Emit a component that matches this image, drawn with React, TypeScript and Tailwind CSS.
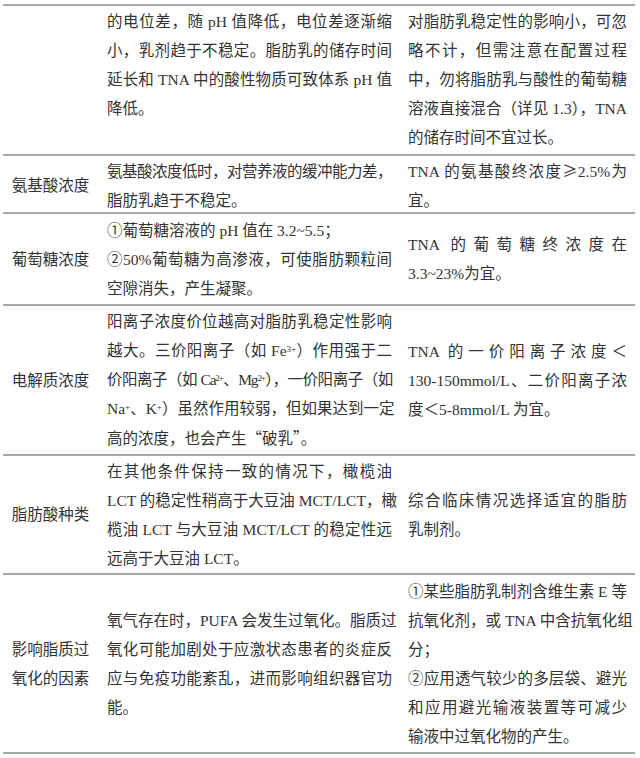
import type { ReactNode } from 'react';

type Line = { t: ReactNode; j?: boolean; cls?: string };

type Row = {
  h: string;
  name: string[];
  desc: Line[];
  note: Line[];
  top?: boolean;
};

function Cjk({ children }: { children: ReactNode }) {
  return <span className="font-['Noto_Sans_CJK_SC',sans-serif]">{children}</span>;
}

const rows: Row[] = [
  {
    h: 'h-[150px]',
    name: [],
    top: true,
    desc: [
      { t: '的电位差，随 pH 值降低，电位差逐渐缩', j: true },
      { t: '小，乳剂趋于不稳定。脂肪乳的储存时间', j: true },
      { t: '延长和 TNA 中的酸性物质可致体系 pH 值', j: true },
      { t: '降低。' },
    ],
    note: [
      { t: '对脂肪乳稳定性的影响小，可忽', j: true },
      { t: '略不计，但需注意在配置过程', j: true },
      { t: '中，勿将脂肪乳与酸性的葡萄糖', j: true },
      { t: '溶液直接混合（详见 1.3），TNA', j: true },
      { t: '的储存时间不宜过长。' },
    ],
  },
  {
    h: 'h-[58px]',
    name: ['氨基酸浓度'],
    desc: [
      { t: '氨基酸浓度低时，对营养液的缓冲能力差，', j: true, cls: 'tracking-[-0.5px]' },
      { t: '脂肪乳趋于不稳定。' },
    ],
    note: [
      {
        t: (
          <>
            TNA 的氨基酸终浓度<Cjk>≥</Cjk>2.5%为
          </>
        ),
        j: true,
      },
      { t: '宜。' },
    ],
  },
  {
    h: 'h-[92px]',
    name: ['葡萄糖浓度'],
    desc: [
      { t: '①葡萄糖溶液的 pH 值在 3.2~5.5；' },
      { t: '②50%葡萄糖为高渗液，可使脂肪颗粒间', j: true },
      { t: '空隙消失，产生凝聚。' },
    ],
    note: [
      { t: 'TNA 的葡萄糖终浓度在', j: true },
      { t: '3.3~23%为宜。' },
    ],
  },
  {
    h: 'h-[150px]',
    name: ['电解质浓度'],
    desc: [
      { t: '阳离子浓度价位越高对脂肪乳稳定性影响', j: true },
      {
        t: (
          <>
            越大。三价阳离子（如 Fe<sup className="text-[9px]">3+</sup>）作用强于二
          </>
        ),
        j: true,
      },
      {
        t: (
          <>
            价阳离子（如 Ca<sup className="text-[9px]">2+</sup>、Mg<sup className="text-[9px]">2+</sup>），一价阳离子（如
          </>
        ),
        j: true,
        cls: 'tracking-[-1.2px]',
      },
      {
        t: (
          <>
            Na<sup className="text-[9px]">+</sup>、K<sup className="text-[9px]">+</sup>）虽然作用较弱，但如果达到一定
          </>
        ),
        j: true,
      },
      {
        t: (
          <>
            高的浓度，也会产生<Cjk>“</Cjk>破乳<Cjk>”</Cjk>。
          </>
        ),
      },
    ],
    note: [
      { t: 'TNA 的一价阳离子浓度＜', j: true },
      { t: '130-150mmol/L、二价阳离子浓', j: true },
      { t: '度＜5-8mmol/L 为宜。' },
    ],
  },
  {
    h: 'h-[119px]',
    name: ['脂肪酸种类'],
    desc: [
      { t: '在其他条件保持一致的情况下，橄榄油', j: true },
      { t: 'LCT 的稳定性稍高于大豆油 MCT/LCT，橄', j: true },
      { t: '榄油 LCT 与大豆油 MCT/LCT 的稳定性远', j: true },
      { t: '远高于大豆油 LCT。' },
    ],
    note: [
      { t: '综合临床情况选择适宜的脂肪', j: true },
      { t: '乳制剂。' },
    ],
  },
  {
    h: 'h-[179px]',
    name: ['影响脂质过', '氧化的因素'],
    desc: [
      { t: '氧气存在时，PUFA 会发生过氧化。脂质过', j: true },
      { t: '氧化可能加剧处于应激状态患者的炎症反', j: true },
      { t: '应与免疫功能紊乱，进而影响组织器官功', j: true },
      { t: '能。' },
    ],
    note: [
      { t: '①某些脂肪乳制剂含维生素 E 等', j: true },
      { t: '抗氧化剂，或 TNA 中含抗氧化组', j: true },
      { t: '分；' },
      { t: '②应用透气较少的多层袋、避光', j: true },
      { t: '和应用避光输液装置等可减少', j: true },
      { t: '输液中过氧化物的产生。' },
    ],
  },
];

function Lines({ lines }: { lines: Line[] }) {
  return (
    <div className="w-full">
      {lines.map((l, i) => (
        <span
          key={i}
          className={`block whitespace-nowrap ${l.j ? 'text-justify [text-align-last:justify]' : 'text-left'} ${l.cls ?? ''}`}
        >
          {l.t}
        </span>
      ))}
    </div>
  );
}

export default function App() {
  return (
    <div className="w-[640px] h-[758px] bg-white pt-[4px] pl-[3px] font-['Liberation_Serif','Noto_Sans_CJK_SC',serif] text-[15.5px] leading-[29px] text-[#333]">
      <div className="w-[632px] border-t-2 border-[#a8a8a8]">
        {rows.map((r, i) => (
          <div
            key={i}
            className={`grid grid-cols-[95px_302px_235px] border-b-2 border-[#a8a8a8] ${r.h}`}
          >
            <div className="flex flex-col items-center justify-center text-center">
              {r.name.map((n) => (
                <span key={n} className="block">
                  {n}
                </span>
              ))}
            </div>
            <div className={`flex pl-[9px] pr-[8px] ${r.top ? 'items-start pt-[1px]' : 'items-center'}`}>
              <Lines lines={r.desc} />
            </div>
            <div className={`flex pl-[8px] pr-[8px] ${r.top ? 'items-start pt-[1px]' : 'items-center'}`}>
              <Lines lines={r.note} />
            </div>
          </div>
        ))}
      </div>
    </div>
  );
}
